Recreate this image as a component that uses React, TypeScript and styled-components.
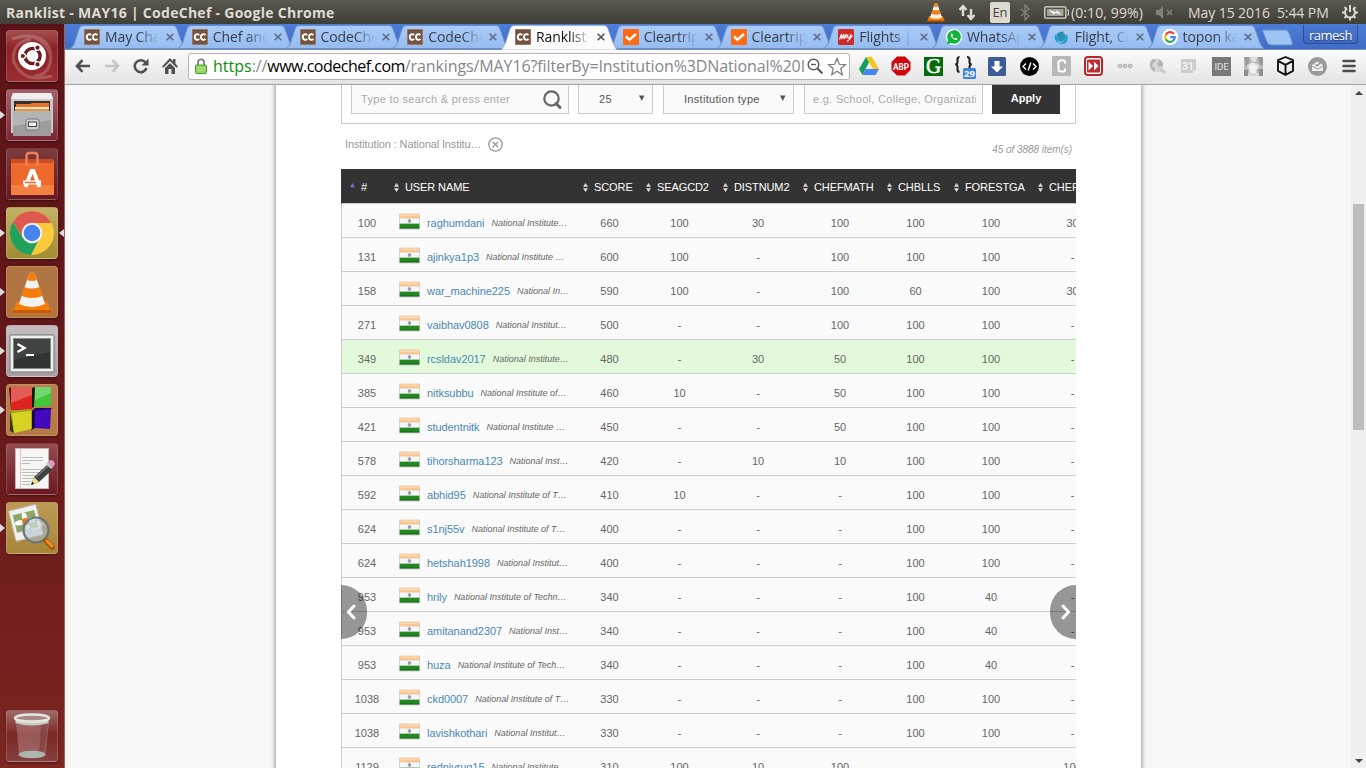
import React from "react";
import styled, { createGlobalStyle } from "styled-components";

const GlobalStyle = createGlobalStyle`
  * { box-sizing: border-box; }
  html, body { margin: 0; padding: 0; overflow: hidden; }
  svg { display: block; flex: none; }
`;

const uiFont = `"Open Sans", "Noto Sans", sans-serif`;
const pageFont = `"Liberation Sans", Arial, sans-serif`;

/* ---------- desktop ---------- */

const Desktop = styled.div`
  width: 1366px;
  height: 768px;
  display: flex;
  flex-direction: column;
  overflow: hidden;
  font-family: ${uiFont};
`;

const TopPanel = styled.header`
  flex: 0 0 24px;
  display: flex;
  align-items: center;
  padding: 0 8px 0 6px;
  background: linear-gradient(#5d5a4f 0, #55534a 4px, #3f3e38 100%);
  color: #dfdbd2;
  white-space: nowrap;
`;

const WindowTitle = styled.div`
  flex: 1;
  font-size: 14px;
  font-weight: 700;
  letter-spacing: 0.28px;
`;

const Indicator = styled.div<{ $w: number }>`
  width: ${(p) => p.$w}px;
  flex: none;
  display: flex;
  align-items: center;
`;

const IndicatorText = styled.span<{ $ls?: number }>`
  font-size: 14px;
  letter-spacing: ${(p) => p.$ls ?? 0}px;
  white-space: pre;
`;

const LangBadge = styled.span`
  width: 20px;
  height: 21px;
  border-radius: 2px;
  background: #dfdbd2;
  color: #45433d;
  font-size: 13px;
  line-height: 21px;
  text-align: center;
`;

const Workspace = styled.div`
  flex: 1;
  display: flex;
  min-height: 0;
`;

/* ---------- launcher ---------- */

const LauncherBar = styled.nav`
  flex: 0 0 65px;
  display: flex;
  flex-direction: column;
  gap: 7px;
  padding: 6px 0 6px;
  border-right: 1px solid #a2625e;
  background: linear-gradient(#551015 0, #5c1318 5px, #641719 45%, #7c2521 100%);
`;

const LauncherSlot = styled.div<{ $last?: boolean }>`
  height: 52px;
  display: flex;
  align-items: center;
  margin-top: ${(p) => (p.$last ? "auto" : "0")};
`;

const Marker = styled.span<{ $dir?: "left" | "right"; $on?: boolean }>`
  width: 0;
  height: 0;
  border: 4px solid transparent;
  border-right-width: ${(p) => (p.$dir === "left" ? 5 : 0)}px;
  border-left-width: ${(p) => (p.$dir === "left" ? 0 : 5)}px;
  border-left-color: ${(p) => (p.$on && p.$dir !== "left" ? "#ddd" : "transparent")};
  border-right-color: ${(p) => (p.$on && p.$dir === "left" ? "#ddd" : "transparent")};
`;

const Tile = styled.div<{ $bg: string }>`
  width: 52px;
  height: 52px;
  margin: 0 1px;
  border-radius: 4px;
  border: 1px solid rgba(255, 255, 255, 0.16);
  background: ${(p) => p.$bg};
  box-shadow: 0 1px 2px rgba(0, 0, 0, 0.4);
  display: flex;
  align-items: center;
  justify-content: center;
  overflow: hidden;
`;

/* ---------- browser chrome ---------- */

const Browser = styled.main`
  flex: 1;
  min-width: 0;
  display: flex;
  flex-direction: column;
`;

const TabStrip = styled.div`
  flex: 0 0 25px;
  display: flex;
  padding-left: 5px;
  background: linear-gradient(#4d7dd8, #406cc6);
  border-bottom: 1px solid #7591bd;
`;

const TabBox = styled.div<{ $active?: boolean }>`
  position: relative;
  z-index: ${(p) => (p.$active ? 2 : 1)};
  flex: 0 0 107.75px;
  height: 25px;
  display: flex;
  align-items: center;
  padding: 1px 0 0 14px;
`;

const TabShape = styled.svg`
  position: absolute;
  left: 0;
  top: 1px;
  z-index: -1;
`;

const TabTitle = styled.span<{ $active?: boolean }>`
  width: 54px;
  margin-left: 5px;
  font-size: 14px;
  letter-spacing: -0.1px;
  line-height: 20px;
  white-space: nowrap;
  overflow: hidden;
  color: ${(p) => (p.$active ? "#111" : "#363d49")};
  mask-image: linear-gradient(90deg, #000 62%, transparent 100%);
`;

const CloseIcon = styled.svg`
  margin-left: 7px;
`;

const NewTab = styled.svg`
  margin: 5px 0 0 7px;
`;

const UserBadge = styled.div`
  margin: 1px 8px 0 auto;
  width: 55px;
  height: 19px;
  border: 1px solid #2c4f94;
  border-top: 0;
  border-radius: 0 0 4px 4px;
  background: linear-gradient(#4a78d2, #3f69bf);
  color: #fff;
  font-size: 13px;
  line-height: 20px;
  letter-spacing: -0.5px;
  text-align: center;
  text-shadow: 0 1px 1px #213c74;
`;

const Toolbar = styled.div`
  flex: 0 0 35px;
  display: flex;
  align-items: center;
  padding: 0 0 2px 3px;
  background: linear-gradient(#fbfbfb, #e3e3e3);
  border-bottom: 1px solid #a3a3a3;
`;

const NavSlot = styled.div`
  flex: 0 0 29px;
  display: flex;
  justify-content: center;
`;

const Omnibox = styled.div`
  flex: 0 0 660px;
  height: 27px;
  margin: 0 3px 0 4px;
  padding: 0 2px 0 6px;
  display: flex;
  align-items: center;
  border: 1px solid #b3b3b3;
  border-radius: 3px;
  background: #fff;
`;

const Url = styled.div`
  flex: 0 0 592px;
  margin: 0 2px 0 6px;
  overflow: hidden;
  white-space: nowrap;
  font-size: 16px;
  line-height: 24px;
  letter-spacing: -0.11px;
  color: #85878c;
`;
const UrlScheme = styled.span`
  color: #0b8f0b;
  letter-spacing: 0;
`;
const UrlHost = styled.span`
  color: #000;
  letter-spacing: -0.5px;
`;

const StarIcon = styled.svg`
  margin-left: 4px;
`;

const ExtSlot = styled.div`
  flex: 0 0 32px;
  display: flex;
  justify-content: center;
`;

/* ---------- page ---------- */

const Viewport = styled.div`
  flex: 1;
  display: flex;
  min-height: 0;
  background: #f7f7f7;
  font-family: ${pageFont};
  font-size: 11px;
  color: #666;
`;

const PageArea = styled.div`
  flex: 1;
  padding-left: 211px;
  overflow: hidden;
`;

const Sheet = styled.section`
  width: 865px;
  height: 100%;
  padding: 0 65px;
  background: #fff;
  box-shadow: 0 0 3px 2px #b5b5b5;
`;

const Filters = styled.div`
  height: 39px;
  display: flex;
  align-items: flex-start;
  padding-left: 9px;
  border: 1px solid #ccc;
  border-top: 0;
`;

const Field = styled.div<{ $w: number; $gap: number; $muted?: boolean; $pad?: number }>`
  width: ${(p) => p.$w}px;
  height: 29px;
  margin-right: ${(p) => p.$gap}px;
  padding: 0 6px 0 ${(p) => p.$pad ?? 9}px;
  display: flex;
  align-items: center;
  justify-content: space-between;
  border: 1px solid #ccc;
  border-top: 0;
  background: #fafafa;
  color: ${(p) => (p.$muted ? "#a9a9a9" : "#555")};
  letter-spacing: 0.3px;
  white-space: nowrap;
  overflow: hidden;
`;

const FieldText = styled.span`
  width: 164px;
  overflow: hidden;
`;

const ApplyButton = styled.button`
  width: 68px;
  height: 29px;
  border: 0;
  padding: 0 0 3px;
  background: #333;
  color: #fff;
  font: bold 11px ${pageFont};
`;

const Summary = styled.div`
  height: 45px;
  display: flex;
  justify-content: space-between;
  padding: 0 4px;
  color: #999;
`;

const ActiveFilter = styled.div`
  display: flex;
  align-items: center;
  gap: 7px;
  height: 40px;
  letter-spacing: -0.12px;
`;

const ItemCount = styled.div`
  font-size: 10px;
  font-style: italic;
  line-height: 52px;
  letter-spacing: -0.05px;
`;

const TableFrame = styled.div`
  position: relative;
  width: 735px;
  height: 601px;
  overflow: hidden;
`;

const Row = styled.div<{ $mine?: boolean }>`
  width: 776px;
  height: 34px;
  display: grid;
  grid-template-columns: 44px 189px 63px 77px 80px 84px 67px 84px 85px;
  border-left: 1px solid #ccc;
  border-bottom: 1px solid #ccc;
  background: ${(p) => (p.$mine ? "#e2fadb" : "#fafafa")};
`;

const HeadRow = styled(Row)`
  height: 35px;
  border-left-color: #333;
  background: #333;
`;

const HeadCell = styled.div`
  display: flex;
  align-items: center;
  gap: 6px;
  padding: 2px 0 0 8px;
  color: #fff;
  letter-spacing: -0.1px;
  white-space: nowrap;
`;

const Cell = styled.div<{ $shift: number }>`
  padding: 5px 0 0 ${(p) => p.$shift}px;
  line-height: 29px;
  text-align: center;
`;

const UserCell = styled.div`
  display: flex;
  align-items: center;
  padding: 3px 0 0 13px;
  white-space: nowrap;
`;

const UserName = styled.a`
  margin: 0 7px 0 7px;
  color: #4a89b5;
  letter-spacing: -0.06px;
`;

const School = styled.em`
  font-size: 9px;
  color: #666;
`;

const FlagIcon = styled.svg`
  margin-bottom: 2px;
`;

const Pager = styled.div<{ $side: "left" | "right" }>`
  position: absolute;
  top: 416px;
  ${(p) => p.$side}: 0;
  width: 26px;
  height: 54px;
  display: flex;
  align-items: center;
  justify-content: center;
  padding-${(p) => (p.$side === "left" ? "right" : "left")}: 6px;
  background: rgba(0, 0, 0, 0.4);
  border-radius: ${(p) => (p.$side === "left" ? "0 27px 27px 0" : "27px 0 0 27px")};
`;

const Scrollbar = styled.div`
  flex: 0 0 15px;
  display: flex;
  flex-direction: column;
  align-items: center;
  justify-content: space-between;
  padding: 6px 0 5px;
  background: #f0f0f0;
`;

const Thumb = styled.div`
  width: 11px;
  height: 226px;
  margin: 109px 0 auto;
  background: #bdbdbd;
`;

const Caret = styled.span<{ $up?: boolean }>`
  width: 0;
  height: 0;
  border: 4px solid transparent;
  border-${(p) => (p.$up ? "top" : "bottom")}-width: 0;
  border-${(p) => (p.$up ? "bottom" : "top")}-color: #444;
`;

/* ---------- small drawings ---------- */

const Cone = ({ size }: { size: number }) => (
  <svg width={size} height={size} viewBox="0 0 44 44">
    <path d="M7 31h30l4 11H3z" fill="#f57f0a" />
    <path d="M3 40h38v3H3z" fill="#c95a00" />
    <path d="M19 4q3-3 6 0l10 30q-13 6-26 0z" fill="#f2f2f2" />
    <path d="M19 4q3-3 6 0l2 6q-5 2-10 0zM14.600 17q7 3 14.800 0l3 9q-10 4-20.800 0z" fill="#f47d0c" />
  </svg>
);

const CodeChefIcon = () => (
  <svg width="16" height="16" viewBox="0 0 16 16">
    <rect width="16" height="16" fill="#75543f" stroke="#b99a83" />
    <path d="M7.200 6.200Q6.200 5 4.800 5.200 2.800 5.600 2.800 8t2 2.800q1.400.2 2.400-1M13.400 6.200Q12.400 5 11 5.200 9 5.600 9 8t2 2.800q1.400.2 2.400-1" fill="none" stroke="#fff" strokeWidth="1.900" />
  </svg>
);

const ClearTripIcon = () => (
  <svg width="16" height="16" viewBox="0 0 16 16">
    <rect width="16" height="16" rx="1" fill="#ff6a13" />
    <path d="M3 7.500l3.500 3.200L13 5" fill="none" stroke="#fff" strokeWidth="2.400" />
  </svg>
);

const MyIcon = () => (
  <svg width="16" height="16" viewBox="0 0 16 16">
    <rect width="16" height="16" rx="1.500" fill="#cf2a27" />
    <path d="M1.500 10.500L3.500 5v5l2.300-5v5l2.500-5-.3 4.500M10 5.500q-1 4 1 3.500 1.500-1 2-4-.5 5.500-4 7.500M11.500 10.500l3-4" fill="none" stroke="#fff" strokeWidth="1.100" />
  </svg>
);

const WhatsAppIcon = () => (
  <svg width="16" height="16" viewBox="0 0 16 16">
    <circle cx="8" cy="8" r="8" fill="#fff" />
    <path d="M1 15l1-4A6.800 6.800 0 1 1 5 14z" fill="#12b53a" />
    <path d="M5.300 4.500q-1 1-.2 2.800 1.400 2.900 4.500 3.800 1.600.1 2-1.300L9.700 8.800l-1 .9Q7 9 6.300 7.300l.7-.9-.8-1.900z" fill="#fff" />
  </svg>
);

const FlightIcon = () => (
  <svg width="16" height="16" viewBox="0 0 16 16">
    <path d="M1.500 5Q-1 11 4.500 14.500 4 10 1.500 5" fill="#1aa3c0" />
    <path d="M5 15q9 1 8.500-6 0-3-1-4.500Q12 12 5 15" fill="#1aa3c0" />
    <path d="M2.500 5q3-3 6.500-2.500Q13 6 11 9.500 9 12.500 6 13 2.500 10 2.500 5" fill="#2790b8" />
    <path d="M9.500 4l1-2.500 2 .5 2-2 .500 1.500-2 1.500v2l-1 1z" fill="#bccbd0" />
  </svg>
);

const GoogleIcon = () => (
  <svg width="16" height="16" viewBox="0 0 16 16">
    <circle cx="8" cy="8" r="8" fill="#fff" />
    <g fill="none" strokeWidth="2.200">
      <path d="M11.800 5A4.900 4.900 0 0 0 3.700 5.700" stroke="#ea4335" />
      <path d="M3.700 5.700a4.900 4.900 0 0 0 0 4.600" stroke="#fbbc05" />
      <path d="M3.700 10.300a4.900 4.900 0 0 0 7.500 1.400" stroke="#34a853" />
      <path d="M11.200 11.700Q13 10 12.800 8.100H8.200" stroke="#4285f4" />
    </g>
  </svg>
);

const Flag = () => (
  <FlagIcon width="21" height="17" viewBox="0 0 21 17">
    <rect x="0" y="1" width="21" height="15.500" rx="1" fill="#aaa" opacity=".55" />
    <rect x=".7" y=".6" width="19.600" height="5" fill="#fbc48f" />
    <rect x="1.700" y="1.600" width="17.600" height="1.500" fill="#fddcb9" />
    <rect x=".7" y="5.500" width="19.600" height="5.200" fill="#f7f7f7" />
    <rect x=".7" y="10.700" width="19.600" height="4.600" fill="#208a20" />
    <rect x=".7" y="14.400" width="19.600" height="1" fill="#176517" />
    <circle cx="10.500" cy="8" r="1.900" fill="#a9a9d6" />
    <circle cx="10.500" cy="8" r=".8" fill="#7474bb" />
  </FlagIcon>
);

const SortMark = ({ first }: { first?: boolean }) => (
  <svg width="5" height="9" viewBox="0 0 5 9">
    {first ? (
      <path d="M0 4.200L2.500 0 5 4.200z" fill="#6f74d8" />
    ) : (
      <path d="M0 3.800L2.500 0 5 3.800zM0 5.200L2.500 9 5 5.200z" fill="#ddd" />
    )}
  </svg>
);

/* ---------- launcher tiles ---------- */

const UbuntuLogo = () => (
  <svg width="50" height="50" viewBox="0 0 50 50">
    <g fill="none" stroke="#fff" strokeOpacity=".2" strokeWidth="3">
      <path d="M25 5q22 4 18 28-4 12-16 12M7 33Q3 12 24 8M45 45q-30 8-38-15M5 8q28-10 38 15" />
    </g>
    <circle cx="25" cy="25" r="14" fill="#fff" />
    <circle cx="25.500" cy="25" r="7.600" fill="none" stroke="#6e1a1e" strokeWidth="3.400" />
    <path d="M25.500 25L14 25M25.500 25l6-10M25.500 25l6 10" stroke="#fff" strokeWidth="1.500" />
    <g fill="#6e1a1e" stroke="#fff" strokeWidth="1.200">
      <circle cx="15.800" cy="25" r="2.700" />
      <circle cx="30.500" cy="16.600" r="2.700" />
      <circle cx="30.500" cy="33.400" r="2.700" />
    </g>
  </svg>
);

const FilesLogo = () => (
  <svg width="50" height="50" viewBox="0 0 50 50">
    <path d="M6 3h38l2 5v35H4V8z" fill="#c9c9c9" />
    <path d="M6 3h38l2 6H4z" fill="#eee" />
    <rect x="7" y="11" width="36" height="11" fill="#38302c" />
    <path d="M9 14h14l2-1h17v8H9z" fill="#e8742a" />
    <path d="M8 17h34v4H8z" fill="#f6e3c5" />
    <path d="M8 19h34v3H8z" fill="#e69340" />
    <path d="M6 21h38v25H6z" fill="#9d9d9d" />
    <path d="M6 21h38v9L6 36z" fill="#b4b4b4" />
    <rect x="19" y="29" width="13" height="11" rx="2" fill="#cfcfcf" stroke="#777" />
    <rect x="21.500" y="32" width="8" height="4.500" fill="#eee" stroke="#444" />
  </svg>
);

const SoftwareLogo = () => (
  <svg width="50" height="50" viewBox="0 0 50 50">
    <path d="M4 10h42l1 3v33H4z" fill="#ee6a2c" />
    <path d="M4 10h42v4H4z" fill="#c94e20" />
    <path d="M4 36h43v10H4z" fill="#f58044" />
    <path d="M19.500 17V7q0-3 3-3h5q3 0 3 3v10" fill="none" stroke="#f07f58" strokeWidth="2.500" />
    <path d="M18.500 38l6-16h2l6 16" fill="none" stroke="#fff" strokeWidth="3.800" />
    <path d="M16 33.500h18" stroke="#fff" strokeWidth="4" />
    <path d="M18 33.500h11" stroke="#ee6a2c" strokeWidth="1.300" />
  </svg>
);

const ChromeLogo = () => (
  <svg width="50" height="50" viewBox="0 0 50 50">
    <circle cx="25" cy="25" r="22" fill="#f8ca3c" />
    <path d="M5.900 14A22 22 0 0 1 44.500 15H25l-9.500 14z" fill="#de5a50" />
    <path d="M5.900 14L16 30l9 5 7-4-8 16A22 22 0 0 1 5.900 14" fill="#21a15c" />
    <circle cx="25" cy="25" r="10.300" fill="#f4f4f4" />
    <circle cx="25" cy="25" r="8.300" fill="#4685ee" />
  </svg>
);

const TerminalLogo = () => (
  <svg width="50" height="50" viewBox="0 0 50 50">
    <rect x="3" y="9" width="44" height="37" rx="1" fill="#eceded" stroke="#777" />
    <rect x="6.500" y="12.500" width="37" height="30" fill="#303434" stroke="#8a8a8a" />
    <path d="M7 13h36v13L7 34z" fill="#4a4e4e" opacity=".6" />
    <path d="M10.500 18l7 4-7 4" fill="none" stroke="#fff" strokeWidth="2.400" />
    <path d="M19 29h8" stroke="#fff" strokeWidth="2" />
  </svg>
);

const BlocksLogo = () => (
  <svg width="50" height="50" viewBox="0 0 50 50">
    <path d="M2 3l3-1h20v22L4 25z" fill="#5a0d08" />
    <path d="M25 3l3-1v19l-3 2z" fill="#0d1a08" />
    <path d="M3 26l4 2v20l-4-2z" fill="#3c3708" />
    <path d="M24 27l4-4h17l-2 3z" fill="#1d0268" />
    <path d="M24 26h4v17l-4 2z" fill="#1b0456" />
    <path d="M4 2h21v22L4 25z" fill="#dc2420" />
    <path d="M28 2h16v19l-17 1z" fill="#41c83a" />
    <path d="M3 26l20-2 2 2v18L7 48z" fill="#aaa51c" />
    <path d="M5 28l19-2v18L7 48z" fill="#d8d323" />
    <path d="M28 26l16-2-1 20-15-1z" fill="#4408c0" />
    <path d="M4 2h21v8L4 18zM28 2h16v6L28 15z" fill="#fff" opacity=".25" />
  </svg>
);

const EditorLogo = () => (
  <svg width="50" height="50" viewBox="0 0 50 50">
    <rect x="8.500" y="4.500" width="33" height="40" fill="#f6f6f4" stroke="#bbb" />
    <path d="M13.500 5v39" stroke="#f0bcbc" />
    <path d="M15 13.500h21M15 16.500h21M15 19.500h8M15 25.500h20M15 28.500h17M15 31.500h20M15 34.500h12M15 37.500h9M15 40.500h8" stroke="#b5b5b5" strokeWidth=".9" />
    <path d="M24 41l3-8 13-12 5 5-13 12z" fill="#3f4242" />
    <path d="M29 33l12-11" stroke="#777" strokeWidth="1.300" />
    <path d="M24 41l3-8 5 5z" fill="#f0e08a" />
    <path d="M24 41l1.200-3.200 2 2z" fill="#111" />
    <path d="M39 20l2-2 5 5-2 2z" fill="#c5c5c5" />
    <path d="M41 18l2-2q4 0 5 4l-2 3z" fill="#e49ac4" />
  </svg>
);

const ViewerLogo = () => (
  <svg width="50" height="50" viewBox="0 0 50 50">
    <g transform="rotate(-14 20 20)">
      <rect x="5" y="4" width="28" height="31" rx="1" fill="#f1f1ef" stroke="#bbb" />
      <rect x="8" y="9" width="22" height="18" fill="#8fa566" />
      <g fill="#fff">
        <ellipse cx="19" cy="13" rx="2.500" ry="4" />
        <ellipse cx="19" cy="23" rx="2.500" ry="4" />
        <ellipse cx="13" cy="18" rx="5" ry="2.500" />
        <ellipse cx="25" cy="18" rx="5" ry="2.500" />
      </g>
      <circle cx="19" cy="18" r="3.500" fill="#e87d1a" />
    </g>
    <circle cx="29" cy="27" r="12.500" fill="#a9bdca" fillOpacity=".55" stroke="#66757c" strokeWidth="2.200" />
    <path d="M20 26q0-8 9-8 6 0 8 4-9 6-17 4" fill="#fff" opacity=".35" />
    <path d="M39 38l6 6" stroke="#a85a0a" strokeWidth="5.500" strokeLinecap="round" />
    <path d="M40 38l5 5" stroke="#e8921f" strokeWidth="3" strokeLinecap="round" />
  </svg>
);

const TrashLogo = () => (
  <svg width="50" height="50" viewBox="0 0 50 50">
    <path d="M9 11h33l-3.500 33q-13 5-26.500 0z" fill="#c9a5a5" opacity=".38" />
    <path d="M34 13h7l-4 30h-5z" fill="#622" opacity=".35" />
    <ellipse cx="25" cy="43.500" rx="13.500" ry="3.800" fill="#adb3ad" />
    <path d="M8.500 7v5q16 5 33 0V7z" fill="#c8cbc6" />
    <ellipse cx="25" cy="7" rx="17" ry="3.600" fill="#a88" stroke="#e4e6e2" strokeWidth="2.500" />
  </svg>
);

const launcherItems = [
  { bg: "linear-gradient(#a34e50,#8c2128 35%,#9a2d30)", icon: <UbuntuLogo />, open: false },
  { bg: "linear-gradient(#a26069,#7d2635)", icon: <FilesLogo />, open: true },
  { bg: "linear-gradient(#7b3b3f,#67171e)", icon: <SoftwareLogo />, open: false },
  { bg: "linear-gradient(#c2b166,#a28c31)", icon: <ChromeLogo />, open: true, focused: true },
  { bg: "linear-gradient(#b07444,#b4753c)", icon: <Cone size={44} />, open: true },
  { bg: "linear-gradient(#c4bcbf,#a99fa3)", icon: <TerminalLogo />, open: true },
  { bg: "linear-gradient(#ba7f4f,#b77b47)", icon: <BlocksLogo />, open: true },
  { bg: "linear-gradient(#934d50,#6d181f)", icon: <EditorLogo />, open: false },
  { bg: "linear-gradient(#bc9a55,#a9853a)", icon: <ViewerLogo />, open: true },
];

const Launcher = () => (
  <LauncherBar>
    {launcherItems.map((item, i) => (
      <LauncherSlot key={i}>
        <Marker $on={item.open} />
        <Tile $bg={item.bg}>{item.icon}</Tile>
        <Marker $dir="left" $on={item.focused} />
      </LauncherSlot>
    ))}
    <LauncherSlot $last>
      <Marker />
      <Tile $bg="linear-gradient(#a06a68,#7c2724 45%,#85403d)"><TrashLogo /></Tile>
    </LauncherSlot>
  </LauncherBar>
);

/* ---------- browser pieces ---------- */

const tabs = [
  { title: "May Challenge", icon: <CodeChefIcon /> },
  { title: "Chef and", icon: <CodeChefIcon /> },
  { title: "CodeChef", icon: <CodeChefIcon /> },
  { title: "CodeChef", icon: <CodeChefIcon /> },
  { title: "Ranklist", icon: <CodeChefIcon />, active: true },
  { title: "Cleartrip", icon: <ClearTripIcon /> },
  { title: "Cleartrip", icon: <ClearTripIcon /> },
  { title: "Flights |", icon: <MyIcon /> },
  { title: "WhatsApp", icon: <WhatsAppIcon /> },
  { title: "Flight, Cheap", icon: <FlightIcon /> },
  { title: "topon ka", icon: <GoogleIcon /> },
];

const Tab = ({ title, icon, active }: { title: string; icon: React.ReactNode; active?: boolean }) => (
  <TabBox $active={active}>
    <TabShape width="120" height="25" viewBox="0 0 120 25">
      <defs>
        <linearGradient id="tabfill" x1="0" y1="0" x2="0" y2="1">
          <stop offset="0" stopColor="#a9cbf8" />
          <stop offset="1" stopColor="#96bcf0" />
        </linearGradient>
      </defs>
      <path
        d={`M0 ${active ? 25 : 23.5}Q3 22 4.500 18L9 4Q10 .5 13 .5h90q3 0 4 3.500l5 14q1.500 4 4 ${active ? 7 : 5.5}z`}
        fill={active ? "#fbfbfb" : "url(#tabfill)"}
        stroke={active ? "#93a9ce" : "#6c8fc9"}
        strokeWidth={active ? 0.6 : 1}
      />
    </TabShape>
    {icon}
    <TabTitle $active={active}>{title}</TabTitle>
    <CloseIcon width="8" height="8" viewBox="0 0 8 8">
      <path d="M.7.7l6.600 6.600M7.300.7L.7 7.300" stroke={active ? "#555" : "#5c6c85"} strokeWidth="1.600" />
    </CloseIcon>
  </TabBox>
);

const ink = "#505050";

const extensions: React.ReactNode[] = [
  <svg width="20" height="18" viewBox="0 0 20 18"><path d="M7 0h6l7 12h-6z" fill="#fbc31c" /><path d="M7 0l3 5.500L3.500 18 0 12z" fill="#12a05c" /><path d="M6.500 12H20l-3.500 6h-13z" fill="#4486f4" /></svg>,
  <svg width="20" height="20" viewBox="0 0 20 20"><path d="M6 .5h8L19.500 6v8L14 19.500H6L.5 14V6z" fill="#d0060c" /><text x="10" y="13.500" fontSize="9.500" fontWeight="700" fill="#fff" textAnchor="middle" textLength="16" lengthAdjust="spacingAndGlyphs" fontFamily="Roboto, sans-serif">ABP</text></svg>,
  <svg width="19" height="19" viewBox="0 0 19 19"><rect width="19" height="19" fill="#066b0b" /><text x="9.500" y="16.300" fontSize="21" fill="#fff" stroke="#fff" strokeWidth=".5" textAnchor="middle" fontFamily="Liberation Serif, serif">G</text></svg>,
  <svg width="22" height="26" viewBox="0 0 22 26"><path d="M5.500 4Q3.500 4 3.500 6.500V9q0 2.500-2.300 2.500 2.300 0 2.300 2.500v2.500q0 2.500 2 2.500M13 4q2.500 0 2.500 2.500V9q0 2.500 2.300 2.500-2.300 0-2.300 2.500v2.500q0 2.500-2.500 2.500" fill="none" stroke="#222" strokeWidth="2.100" /><rect x="9" y="15" width="13" height="11" rx="1.500" fill="#3f84de" /><text x="15.500" y="24" fontSize="9.500" fontWeight="700" fill="#fff" textAnchor="middle" fontFamily="Open Sans, sans-serif">29</text></svg>,
  <svg width="18" height="19" viewBox="0 0 18 19"><rect width="18" height="19" rx="1.500" fill="#3c5c96" /><path d="M6.500 4h5v5.500H15L9 15.500 3 9.500h3.500z" fill="#fff" /></svg>,
  <svg width="19" height="19" viewBox="0 0 19 19"><circle cx="9.500" cy="9.500" r="9.500" fill="#000" /><path d="M6 6.500l-3 3 3 3M13 6.500l3 3-3 3M10.800 5.500l-2.600 8" fill="none" stroke="#fff" strokeWidth="1.400" /></svg>,
  <svg width="19" height="20" viewBox="0 0 19 20"><rect width="19" height="20" rx="1" fill="#b8b8b8" /><path d="M13 7.500V6q0-1.500-1.500-1.500h-3Q6.500 4.500 6.500 6v8q0 1.500 2 1.500h3q1.500 0 1.500-1.500v-1.500" fill="none" stroke="#fff" strokeWidth="2" /></svg>,
  <svg width="19" height="20" viewBox="0 0 19 20"><rect x="1" y="1" width="17" height="18" rx="3" fill="#fff" stroke="#b5262b" strokeWidth="2" /><rect x="3" y="3.500" width="13" height="13" rx="1" fill="#c3282d" /><path d="M4.500 5.500L9 10l-4.500 4.500zM10 5.500l4.500 4.500-4.500 4.500z" fill="#fff" /></svg>,
  <svg width="16" height="6" viewBox="0 0 16 6"><g fill="#ccc" stroke="#b0b0b0"><circle cx="2.800" cy="3" r="1.900" /><circle cx="8" cy="3" r="1.900" /><circle cx="13.200" cy="3" r="1.900" /></g></svg>,
  <svg width="17" height="17" viewBox="0 0 17 17"><circle cx="7.500" cy="7.500" r="7" fill="#d9d9d9" /><path d="M1 4q3-4 5-3l1 3-3 1-1 3 3 2v4q-6-3-5-10zM9 1q5 2 5 6l-2 2-3-1-1-3 2-1z" fill="#b5b5b5" /><path d="M9 12l3-2 5 4-2 2z" fill="#cacaca" /></svg>,
  <svg width="16" height="16" viewBox="0 0 16 16"><path d="M0 1h15v11l-3 3H0z" fill="#ccc" /><path d="M12 15v-3h3z" fill="#e9e9e9" /><text x="7" y="12" fontSize="10" fontWeight="700" fill="#f4f4f4" textAnchor="middle" fontFamily="Roboto, sans-serif">31</text></svg>,
  <svg width="19" height="19" viewBox="0 0 19 19"><rect width="19" height="19" fill="#787878" /><text x="9.500" y="13" fontSize="9.500" fill="#e5e5e5" textAnchor="middle" fontFamily="Roboto, sans-serif">IDE</text></svg>,
  <svg width="19" height="19" viewBox="0 0 19 19"><rect width="19" height="19" fill="#b9b9b9" /><path d="M0 0h5v9H2zM14 0h5v8l-3 1z" fill="#9a9a9a" /><path d="M6 0h7l-1 5H8zM3 8l3-2 1 4-3 2zM12 6l4 3-2 3-2-1z" fill="#dedede" /><path d="M7 6h4l2 5-1 6H6l-1-6z" fill="#f1f1f1" /><path d="M0 13h4v6H0zM15 12h4v7h-4z" fill="#8e8e8e" /><path d="M4 16h11v3H4z" fill="#d9d9d9" /></svg>,
  <svg width="19" height="20" viewBox="0 0 19 20"><path d="M9.500 1l7.500 3.200v10.600L9.500 19 2 14.800V4.200zM2 4.800l7.500 4 7.500-4M9.500 8.800V19" fill="none" stroke="#111" strokeWidth="1.900" strokeLinejoin="round" /></svg>,
  <svg width="19" height="19" viewBox="0 0 19 19"><circle cx="9.500" cy="9.500" r="9.500" fill="#999" /><path d="M4 8l5.500-3.500L15 8v6H4z" fill="#eee" /><path d="M4 9l5.500 3.200L15 9" fill="none" stroke="#999" /><path d="M7.500 7.500l1.600 1.500 3-3" fill="none" stroke="#888" strokeWidth="1.200" /></svg>,
  <svg width="14" height="14" viewBox="0 0 14 14"><path d="M1.500 2h11M1.500 7h11M1.500 12h11" stroke="#4c4c4c" strokeWidth="2.500" strokeLinecap="round" /></svg>,
];

/* ---------- data ---------- */

const columns = ["#", "USER NAME", "SCORE", "SEAGCD2", "DISTNUM2", "CHEFMATH", "CHBLLS", "FORESTGA", "CHEFSOC"];

type Entry = [string, string, string, ...string[]];
const entries: Entry[] = [
  ["100", "raghumdani", "National Institute…", "660", "100", "30", "100", "100", "100", "30"],
  ["131", "ajinkya1p3", "National Institute …", "600", "100", "-", "100", "100", "100", "-"],
  ["158", "war_machine225", "National In…", "590", "100", "-", "100", "60", "100", "30"],
  ["271", "vaibhav0808", "National Institut…", "500", "-", "-", "100", "100", "100", "-"],
  ["349", "rcsldav2017", "National Institute…", "480", "-", "30", "50", "100", "100", "-"],
  ["385", "nitksubbu", "National Institute of…", "460", "10", "-", "50", "100", "100", "-"],
  ["421", "studentnitk", "National Institute …", "450", "-", "-", "50", "100", "100", "-"],
  ["578", "tihorsharma123", "National Inst…", "420", "-", "10", "10", "100", "100", "-"],
  ["592", "abhid95", "National Institute of T…", "410", "10", "-", "-", "100", "100", "-"],
  ["624", "s1nj55v", "National Institute of T…", "400", "-", "-", "-", "100", "100", "-"],
  ["624", "hetshah1998", "National Institut…", "400", "-", "-", "-", "100", "100", "-"],
  ["953", "hrily", "National Institute of Techn…", "340", "-", "-", "-", "100", "40", "-"],
  ["953", "amitanand2307", "National Inst…", "340", "-", "-", "-", "100", "40", "-"],
  ["953", "huza", "National Institute of Tech…", "340", "-", "-", "-", "100", "40", "-"],
  ["1038", "ckd0007", "National Institute of T…", "330", "-", "-", "-", "100", "100", "-"],
  ["1038", "lavishkothari", "National Institut…", "330", "-", "-", "-", "100", "100", "-"],
  ["1129", "rednivrug15", "National Institute…", "310", "100", "10", "100", "", "", "100"],
];

const SelectArrow = () => (
  <svg width="7" height="9" viewBox="0 0 7 9"><path d="M0 .5h5.500L2.750 6z" fill="#555" /></svg>
);

export default function App() {
  return (
    <Desktop>
      <GlobalStyle />
      <TopPanel>
        <WindowTitle>Ranklist - MAY16 | CodeChef - Google Chrome</WindowTitle>
        <Indicator $w={32}><Cone size={20} /></Indicator>
        <Indicator $w={32}>
          <svg width="18" height="17" viewBox="0 0 18 17"><path d="M5 12V2M1.500 6L5 2l3.500 4M13 5v10M9.500 11l3.500 4 3.500-4" fill="none" stroke="#dfdbd2" strokeWidth="2.400" /></svg>
        </Indicator>
        <Indicator $w={30}><LangBadge>En</LangBadge></Indicator>
        <Indicator $w={24}>
          <svg width="11" height="17" viewBox="0 0 11 17"><path d="M1 5l8 7-4 4V1l4 4-8 7" fill="none" stroke="#85827a" strokeWidth="1.300" /></svg>
        </Indicator>
        <Indicator $w={27}>
          <svg width="25" height="13" viewBox="0 0 25 13"><rect x=".8" y=".8" width="21" height="11.400" rx="1" fill="none" stroke="#dfdbd2" strokeWidth="1.300" /><rect x="3" y="3" width="16.500" height="7" fill="#a5a299" /><path d="M23 4h1.500v5H23" fill="none" stroke="#dfdbd2" /><path d="M5 4l7 2 1-2 5 5-7-2-1 2z" fill="#f3f1ec" /></svg>
        </Indicator>
        <Indicator $w={85}><IndicatorText $ls={0.1}>(0:10, 99%)</IndicatorText></Indicator>
        <Indicator $w={32}>
          <svg width="18" height="13" viewBox="0 0 18 13"><path d="M0 4h3l4-4v13L3 9H0z" fill="#85827a" /><path d="M11 4l5 5M16 4l-5 5" stroke="#85827a" strokeWidth="1.500" /></svg>
        </Indicator>
        <Indicator $w={154}><IndicatorText $ls={-0.08}>{"May 15 2016  5:44 PM"}</IndicatorText></Indicator>
        <Indicator $w={16}>
          <svg width="16" height="17" viewBox="0 0 16 17"><path d="M5 4.500a5 5 0 1 0 6 0" fill="none" stroke="#dfdbd2" strokeWidth="2" /><path d="M8 1v7M0 8.500h3M13 8.500h3M2.500 14l2-2M13.500 14l-2-2M8 13.500v3M2.500 3l2 2M13.500 3l-2 2" stroke="#dfdbd2" strokeWidth="2" /></svg>
        </Indicator>
      </TopPanel>

      <Workspace>
        <Launcher />
        <Browser>
          <TabStrip>
            {tabs.map((t, i) => <Tab key={i} {...t} />)}
            <NewTab width="31" height="17" viewBox="0 0 31 17">
              <path d="M1.500 1h22q2.500 0 3.500 3l3.500 10q0 2-2 2H9q-3 0-4-3L1 3Q0 1 1.500 1z" fill="#9fc3f5" stroke="#6c8fc9" />
            </NewTab>
            <UserBadge>ramesh</UserBadge>
          </TabStrip>
          <Toolbar>
            <NavSlot><svg width="16" height="14" viewBox="0 0 16 14"><path d="M15 7H2M7.500 1.200L2 7l5.500 5.800" fill="none" stroke={ink} strokeWidth="2.600" /></svg></NavSlot>
            <NavSlot><svg width="16" height="14" viewBox="0 0 16 14"><path d="M1 7h13M8.500 1.200L14 7l-5.500 5.800" fill="none" stroke="#c5c5c5" strokeWidth="2.600" /></svg></NavSlot>
            <NavSlot><svg width="16" height="16" viewBox="0 0 16 16"><path d="M12.500 4.500A6 6 0 1 0 13.500 10" fill="none" stroke={ink} strokeWidth="2.500" /><path d="M15.500.5v7h-7z" fill={ink} /></svg></NavSlot>
            <NavSlot><svg width="16" height="16" viewBox="0 0 16 16"><path d="M8 0L0 8.500l1.500 1.300L8 3l6.500 6.800L16 8.500l-2.500-2.700V1H11v2.200z" fill={ink} /><path d="M8 5l5 5v6H9.500v-5h-3v5H3v-6z" fill={ink} /></svg></NavSlot>
            <Omnibox>
              <svg width="12" height="16" viewBox="0 0 12 16"><path d="M3 8V4.500Q3 1.300 6 1.300t3 3.200V8" fill="none" stroke="#7d7d7d" strokeWidth="1.700" /><rect x=".5" y="7" width="11" height="8.500" rx="1" fill="#8ed45c" stroke="#4d9a2e" /><path d="M2 10h8M2 12.500h8" stroke="#b5e693" /></svg>
              <Url>
                <UrlScheme>https</UrlScheme>://<UrlHost>www.codechef.com</UrlHost>/rankings/MAY16?filterBy=Institution%3DNational%20Institute
              </Url>
              <svg width="16" height="16" viewBox="0 0 16 16"><circle cx="6.500" cy="6.500" r="5.300" fill="none" stroke="#5a5a5a" strokeWidth="1.500" /><path d="M4 6.500h5" stroke="#5a5a5a" strokeWidth="1.400" /><path d="M10.500 10.500l5 5" stroke="#5a5a5a" strokeWidth="2.200" /></svg>
              <StarIcon width="20" height="19" viewBox="0 0 20 19"><path d="M10 1.500l2.300 5.800 6.200.4-4.800 4 1.600 6-5.300-3.400-5.300 3.400 1.600-6-4.800-4 6.200-.4z" fill="#fff" stroke="#777" strokeWidth="1.200" /></StarIcon>
            </Omnibox>
            {extensions.map((e, i) => <ExtSlot key={i}>{e}</ExtSlot>)}
          </Toolbar>

          <Viewport>
            <PageArea>
              <Sheet>
                <Filters>
                  <Field $w={218} $gap={9} $muted>
                    Type to search &amp; press enter
                    <svg width="19" height="19" viewBox="0 0 19 19"><circle cx="8.500" cy="8.500" r="7.200" fill="none" stroke="#666" strokeWidth="2.200" /><path d="M13 13.500l4 4" stroke="#666" strokeWidth="3" strokeLinecap="round" /></svg>
                  </Field>
                  <Field $w={75} $gap={10} $pad={20}>25<SelectArrow /></Field>
                  <Field $w={131} $gap={10} $pad={20}>Institution type<SelectArrow /></Field>
                  <Field $w={179} $gap={9} $muted $pad={8}><FieldText>e.g. School, College, Organization</FieldText></Field>
                  <ApplyButton>Apply</ApplyButton>
                </Filters>
                <Summary>
                  <ActiveFilter>
                    Institution : National Institu…
                    <svg width="15" height="15" viewBox="0 0 15 15"><circle cx="7.500" cy="7.500" r="6.700" fill="none" stroke="#999" strokeWidth="1.300" /><path d="M4.800 4.800l5.400 5.400M10.200 4.800l-5.400 5.400" stroke="#999" strokeWidth="1.300" /></svg>
                  </ActiveFilter>
                  <ItemCount>45 of 3888 item(s)</ItemCount>
                </Summary>
                <TableFrame>
                  <HeadRow>
                    {columns.map((c, i) => (
                      <HeadCell key={c}><SortMark first={i === 0} />{c}</HeadCell>
                    ))}
                  </HeadRow>
                  {entries.map(([rank, name, school, ...scores]) => (
                    <Row key={name} $mine={name === "rcsldav2017"}>
                      <Cell $shift={6}>{rank}</Cell>
                      <UserCell>
                        <Flag />
                        <UserName>{name}</UserName>
                        <School>{school}</School>
                      </UserCell>
                      {scores.map((s, i) => <Cell key={i} $shift={i === 6 ? 0 : 6}>{s}</Cell>)}
                    </Row>
                  ))}
                  <Pager $side="left">
                    <svg width="10" height="16" viewBox="0 0 10 16"><path d="M8 2L2.500 8 8 14" fill="none" stroke="#fff" strokeWidth="3" strokeLinecap="round" /></svg>
                  </Pager>
                  <Pager $side="right">
                    <svg width="10" height="16" viewBox="0 0 10 16"><path d="M2 2l5.500 6L2 14" fill="none" stroke="#fff" strokeWidth="3" strokeLinecap="round" /></svg>
                  </Pager>
                </TableFrame>
              </Sheet>
            </PageArea>
            <Scrollbar>
              <Caret $up />
              <Thumb />
              <Caret />
            </Scrollbar>
          </Viewport>
        </Browser>
      </Workspace>
    </Desktop>
  );
}
